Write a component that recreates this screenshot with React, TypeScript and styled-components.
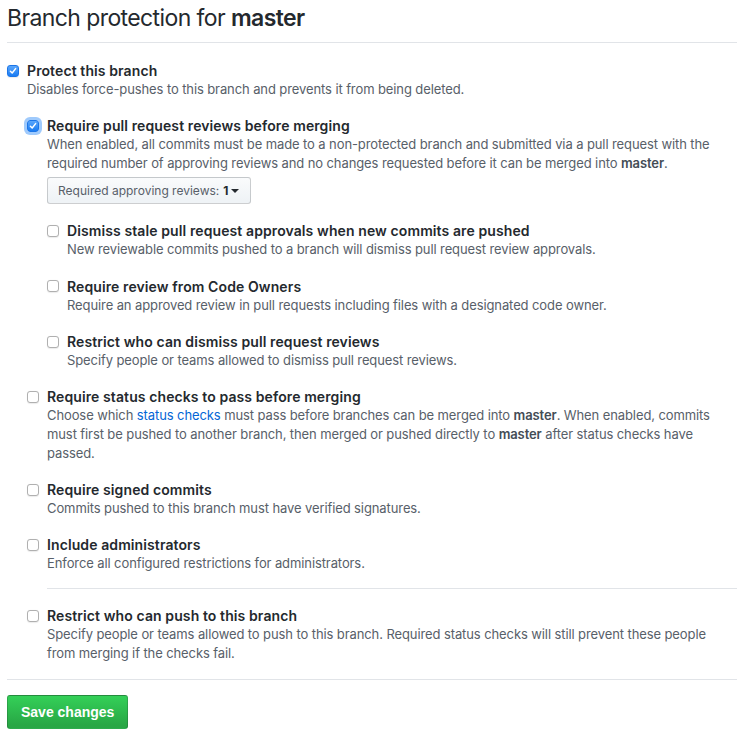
import { FC, ReactNode } from 'react';
import styled, { createGlobalStyle } from 'styled-components';

const GlobalStyle = createGlobalStyle`
    body {
        margin: 0;
        background: #fff;
        font-family: Inter, "Noto Sans", sans-serif;
        color: #24292e;
        -webkit-font-smoothing: antialiased;
    }
`;

const Page = styled.div`
    padding: 0 11px 0 7px;
    width: 730px;
`;

const Title = styled.h2`
    margin: 0;
    padding: 3px 0 9px;
    font-size: 23px;
    font-weight: 400;
    line-height: 30px;
    letter-spacing: -0.6px;
    border-bottom: 1px solid #e1e4e8;

    strong {
        font-weight: 600;
    }
`;

const Form = styled.div`
    padding-top: 18px;
`;

const List = styled.div<{ $gap: number }>`
    display: flex;
    flex-direction: column;
    gap: ${(p) => p.$gap}px;
    margin-top: 17px;
`;

const Item = styled.div`
    display: grid;
    grid-template-columns: 20px 1fr;
`;

const BoxCell = styled.div`
    height: 19px;
    display: flex;
    align-items: center;
`;

const Box = styled.span<{ $checked?: boolean; $focus?: boolean }>`
    width: 12px;
    height: 12px;
    border-radius: 3px;
    box-sizing: border-box;
    display: flex;
    align-items: center;
    justify-content: center;
    background: ${(p) => (p.$checked ? 'linear-gradient(#5aa6fb, #1a7cf3)' : '#fff')};
    border: 1px solid ${(p) => (p.$checked ? '#1c76e8' : '#b0b0b0')};
    box-shadow: ${(p) => (p.$focus ? '0 0 0 3px rgba(64, 150, 250, 0.5)' : '0 0.5px 1px rgba(0, 0, 0, 0.08)')};
`;

const Label = styled.div`
    font-size: 14px;
    font-weight: 600;
    line-height: 19px;
    letter-spacing: 0.1px;
`;

const Note = styled.p`
    margin: 0;
    font-size: 13px;
    line-height: 19px;
    color: #586069;
    letter-spacing: -0.1px;

    strong {
        font-weight: 600;
        color: #444d56;
    }

    a {
        color: #0366d6;
        text-decoration: none;
    }
`;

const SelectButton = styled.button`
    margin-top: 4px;
    display: inline-flex;
    align-items: center;
    height: 27px;
    padding: 0 11px 0 10px;
    font-family: inherit;
    font-size: 12px;
    color: #586069;
    background: linear-gradient(-180deg, #fafbfc 0%, #eff3f6 90%);
    border: 1px solid rgba(27, 31, 35, 0.2);
    border-radius: 3px;

    strong {
        color: #24292e;
        font-weight: 700;
        margin-left: 4px;
    }
`;

const Caret = styled.span`
    display: inline-block;
    margin-left: 3px;
    border-top: 4px solid #24292e;
    border-left: 4px solid transparent;
    border-right: 4px solid transparent;
`;

const Divider = styled.hr`
    margin: -2px 0 0 20px;
    border: 0;
    border-top: 1px solid #e1e4e8;
    height: 0;
`;

const Footer = styled.div`
    margin-top: 16px;
    padding-top: 15px;
    border-top: 1px solid #e1e4e8;
`;

const SaveButton = styled.button`
    height: 34px;
    padding: 0 13px;
    font-family: "Liberation Sans", Arial, sans-serif;
    font-size: 14px;
    font-weight: 700;
    color: #fff;
    background: linear-gradient(-180deg, #34d058 0%, #28a745 90%);
    border: 1px solid rgba(27, 31, 35, 0.2);
    border-radius: 3px;
`;

const Check: FC<{ checked?: boolean; focus?: boolean }> = ({ checked, focus }) => (
    <BoxCell>
        <Box $checked={checked} $focus={focus}>
            {checked && (
                <svg width="8" height="8" viewBox="0 0 8 8">
                    <path d="M1.4 4.2 L3.2 6 L6.6 1.6" fill="none" stroke="#fff" strokeWidth="1.5" strokeLinecap="round" strokeLinejoin="round" />
                </svg>
            )}
        </Box>
    </BoxCell>
);

type OptionProps = {
    label: string;
    note: ReactNode;
    checked?: boolean;
    focus?: boolean;
    children?: ReactNode;
};

const Option: FC<OptionProps> = ({ label, note, checked, focus, children }) => (
    <Item>
        <Check checked={checked} focus={focus} />
        <div>
            <Label>{label}</Label>
            <Note>{note}</Note>
            {children}
        </div>
    </Item>
);

const App: FC = () => (
    <Page>
        <GlobalStyle />
        <Title>
            Branch protection for <strong>master</strong>
        </Title>
        <Form>
            <Option checked label="Protect this branch" note="Disables force-pushes to this branch and prevents it from being deleted.">
                <List $gap={17}>
                    <Option
                        checked
                        focus
                        label="Require pull request reviews before merging"
                        note={
                            <>
                                When enabled, all commits must be made to a non-protected branch and submitted via a pull request with the
                                required number of approving reviews and no changes requested before it can be merged into <strong>master</strong>.
                            </>
                        }
                    >
                        <SelectButton>
                            Required approving reviews:<strong>1</strong>
                            <Caret />
                        </SelectButton>
                        <List $gap={17.5}>
                            <Option
                                label="Dismiss stale pull request approvals when new commits are pushed"
                                note="New reviewable commits pushed to a branch will dismiss pull request review approvals."
                            />
                            <Option
                                label="Require review from Code Owners"
                                note="Require an approved review in pull requests including files with a designated code owner."
                            />
                            <Option
                                label="Restrict who can dismiss pull request reviews"
                                note="Specify people or teams allowed to dismiss pull request reviews."
                            />
                        </List>
                    </Option>
                    <Option
                        label="Require status checks to pass before merging"
                        note={
                            <>
                                Choose which <a href="#status">status checks</a> must pass before branches can be merged into <strong>master</strong>. When
                                enabled, commits must first be pushed to another branch, then merged or pushed directly to <strong>master</strong> after
                                status checks have passed.
                            </>
                        }
                    />
                    <Option label="Require signed commits" note="Commits pushed to this branch must have verified signatures." />
                    <Option label="Include administrators" note="Enforce all configured restrictions for administrators." />
                    <Divider />
                    <Option
                        label="Restrict who can push to this branch"
                        note="Specify people or teams allowed to push to this branch. Required status checks will still prevent these people from merging if the checks fail."
                    />
                </List>
            </Option>
        </Form>
        <Footer>
            <SaveButton>Save changes</SaveButton>
        </Footer>
    </Page>
);

export default App;
